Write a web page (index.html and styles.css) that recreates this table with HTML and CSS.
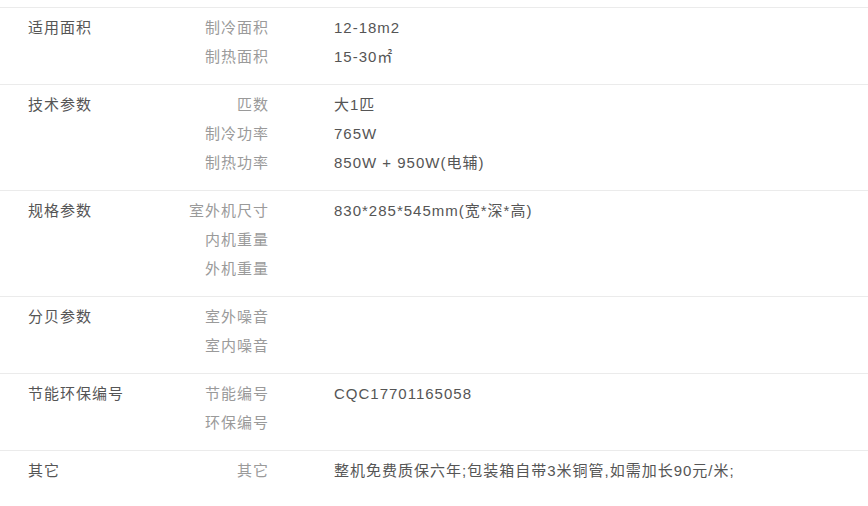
FILE: index.html
```html
<!DOCTYPE html>
<html lang="zh-CN">
<head>
<meta charset="utf-8">
<title>规格参数</title>
<link rel="stylesheet" href="styles.css">
</head>
<body>
<div class="spec">
  <div class="group">
    <div class="group-title">适用面积</div>
    <div class="group-items">
      <div class="item"><span class="item-name">制冷面积</span><span class="item-value">12-18m2</span></div>
      <div class="item"><span class="item-name">制热面积</span><span class="item-value">15-30㎡</span></div>
    </div>
  </div>
  <div class="group">
    <div class="group-title">技术参数</div>
    <div class="group-items">
      <div class="item"><span class="item-name">匹数</span><span class="item-value">大1匹</span></div>
      <div class="item"><span class="item-name">制冷功率</span><span class="item-value">765W</span></div>
      <div class="item"><span class="item-name">制热功率</span><span class="item-value">850W + 950W(电辅)</span></div>
    </div>
  </div>
  <div class="group">
    <div class="group-title">规格参数</div>
    <div class="group-items">
      <div class="item"><span class="item-name">室外机尺寸</span><span class="item-value">830*285*545mm(宽*深*高)</span></div>
      <div class="item"><span class="item-name">内机重量</span><span class="item-value"></span></div>
      <div class="item"><span class="item-name">外机重量</span><span class="item-value"></span></div>
    </div>
  </div>
  <div class="group">
    <div class="group-title">分贝参数</div>
    <div class="group-items">
      <div class="item"><span class="item-name">室外噪音</span><span class="item-value"></span></div>
      <div class="item"><span class="item-name">室内噪音</span><span class="item-value"></span></div>
    </div>
  </div>
  <div class="group">
    <div class="group-title">节能环保编号</div>
    <div class="group-items">
      <div class="item"><span class="item-name">节能编号</span><span class="item-value">CQC17701165058</span></div>
      <div class="item"><span class="item-name">环保编号</span><span class="item-value"></span></div>
    </div>
  </div>
  <div class="group">
    <div class="group-title">其它</div>
    <div class="group-items">
      <div class="item"><span class="item-name">其它</span><span class="item-value">整机免费质保六年;包装箱自带3米铜管,如需加长90元/米;</span></div>
    </div>
  </div>
</div>
</body>
</html>
```
FILE: styles.css
```css
html, body {
  margin: 0;
  padding: 0;
  background: #fff;
}

body {
  font-family: "Liberation Sans", "Noto Sans CJK SC", sans-serif;
  font-size: 15px;
  letter-spacing: 1px;
  color: #555;
}

.spec {
  padding-top: 7px;
}

.group {
  display: flex;
  border-top: 1px solid #ebebeb;
  padding: 5px 0 13px 28px;
  line-height: 29px;
}

.group-title {
  width: 141px;
  flex: none;
  color: #555;
}

.group-items {
  flex: 1;
}

.item {
  display: flex;
  height: 29px;
}

.item-name {
  width: 100px;
  flex: none;
  text-align: right;
  color: #9a9a9a;
}

.item-value {
  margin-left: 65px;
  color: #555;
  white-space: nowrap;
}
```
